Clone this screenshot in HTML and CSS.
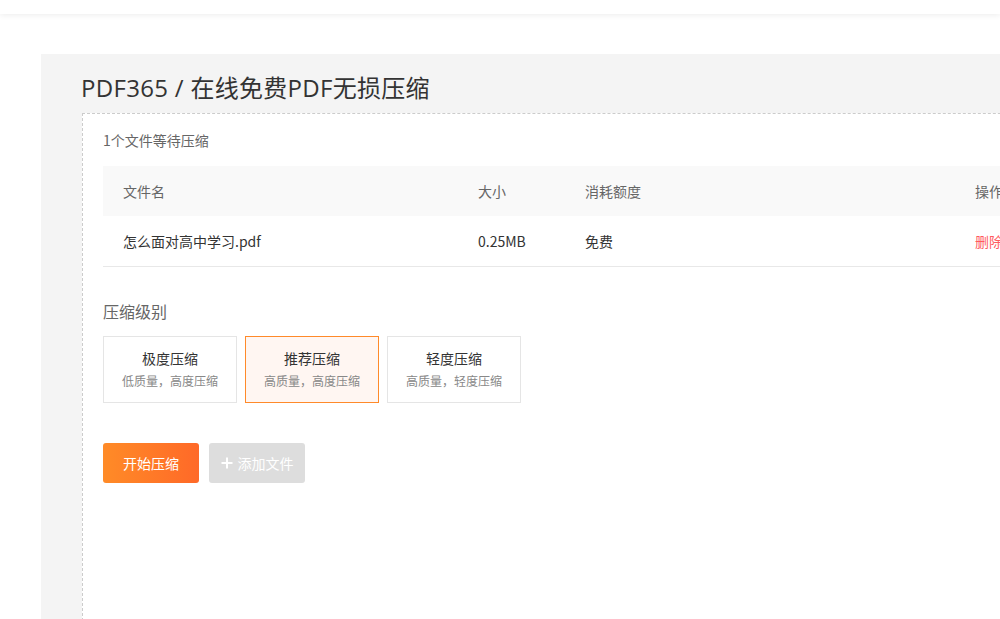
FILE: index.html
```html
<!DOCTYPE html>
<html lang="zh">
<head>
<meta charset="utf-8">
<title>PDF365 在线免费PDF无损压缩</title>
<link rel="stylesheet" href="styles.css">
</head>
<body>
<header class="topbar"></header>
<main class="panel">
  <h1 class="title">PDF365 / 在线免费PDF无损压缩</h1>
  <section class="dropbox">
    <p class="status">1个文件等待压缩</p>
    <div class="table">
      <div class="row head">
        <div class="cell">文件名</div>
        <div class="cell">大小</div>
        <div class="cell">消耗额度</div>
        <div class="cell">操作</div>
      </div>
      <div class="row body">
        <div class="cell">怎么面对高中学习.pdf</div>
        <div class="cell">0.25MB</div>
        <div class="cell">免费</div>
        <div class="cell del">删除</div>
      </div>
    </div>
    <h2 class="level-title">压缩级别</h2>
    <div class="levels">
      <div class="level">
        <div class="level-name">极度压缩</div>
        <div class="level-desc">低质量，高度压缩</div>
      </div>
      <div class="level active">
        <div class="level-name">推荐压缩</div>
        <div class="level-desc">高质量，高度压缩</div>
      </div>
      <div class="level">
        <div class="level-name">轻度压缩</div>
        <div class="level-desc">高质量，轻度压缩</div>
      </div>
    </div>
    <div class="actions">
      <button class="btn primary">开始压缩</button>
      <button class="btn add"><svg class="plus" width="12" height="12" viewBox="0 0 12 12"><path d="M6 0.5V11.5M0.5 6H11.5" stroke="#fff" stroke-width="2" fill="none"/></svg>添加文件</button>
    </div>
  </section>
</main>
</body>
</html>
```
FILE: styles.css
```css
html, body {
  margin: 0;
  padding: 0;
  overflow: hidden;
  background: #fff;
  font-family: "Noto Sans CJK SC", "Open Sans", sans-serif;
  color: #333;
}
.topbar {
  height: 14px;
  background: #fff;
  box-shadow: 0 1px 6px rgba(0,0,0,0.08);
  position: relative;
  z-index: 2;
}
.panel {
  margin: 40px 0 0 41px;
  width: 1120px;
  min-height: 700px;
  background: #f4f4f4;
  padding: 14px 0 0 40px;
  box-sizing: border-box;
}
.title {
  margin: 0;
  font-family: "Open Sans", "Noto Sans CJK SC", sans-serif;
  font-weight: 400;
  font-size: 24px;
  letter-spacing: 0.3px;
  line-height: 40px;
  color: #333;
  height: 45px;
}
.dropbox {
  margin-left: 1px;
  background: #fff;
  border: 1px dashed #ccc;
  min-height: 640px;
  padding: 16px 0 0 20px;
}
.status {
  margin: 0;
  font-size: 14px;
  line-height: 20px;
  color: #666;
}
.table {
  margin-top: 16px;
  font-size: 14px;
}
.row {
  display: grid;
  grid-template-columns: 355px 107px 390px 120px;
  align-items: center;
  height: 50px;
}
.row .cell { padding-left: 20px; }
.row.head {
  background: #f9f9f9;
  color: #666;
}
.row.body {
  border-bottom: 1px solid #e8e8e8;
  color: #333;
}
.del { color: #ff5a5f; }
.level-title {
  margin: 32px 0 0;
  font-size: 16px;
  font-weight: 400;
  line-height: 24px;
  color: #666;
}
.levels {
  display: flex;
  gap: 8px;
  margin-top: 13px;
}
.level {
  width: 134px;
  height: 67px;
  box-sizing: border-box;
  border: 1px solid #e5e5e5;
  background: #fff;
  text-align: center;
  padding-top: 11px;
}
.level.active {
  border-color: #ff8a2a;
  background: #fff6f2;
}
.level-name {
  font-size: 14px;
  line-height: 20px;
  color: #333;
}
.level-desc {
  font-size: 12px;
  line-height: 18px;
  color: #888;
  margin-top: 4px;
}
.actions {
  display: flex;
  gap: 10px;
  margin-top: 40px;
}
.btn {
  width: 96px;
  height: 40px;
  border: 0;
  border-radius: 3px;
  font-family: "Noto Sans CJK SC", sans-serif;
  font-size: 14px;
  color: #fff;
  display: flex;
  align-items: center;
  justify-content: center;
  gap: 5px;
  padding: 0;
}
.btn.primary {
  background: linear-gradient(90deg, #ff8b27, #ff6928);
}
.btn.add {
  background: #dddddd;
}
```
